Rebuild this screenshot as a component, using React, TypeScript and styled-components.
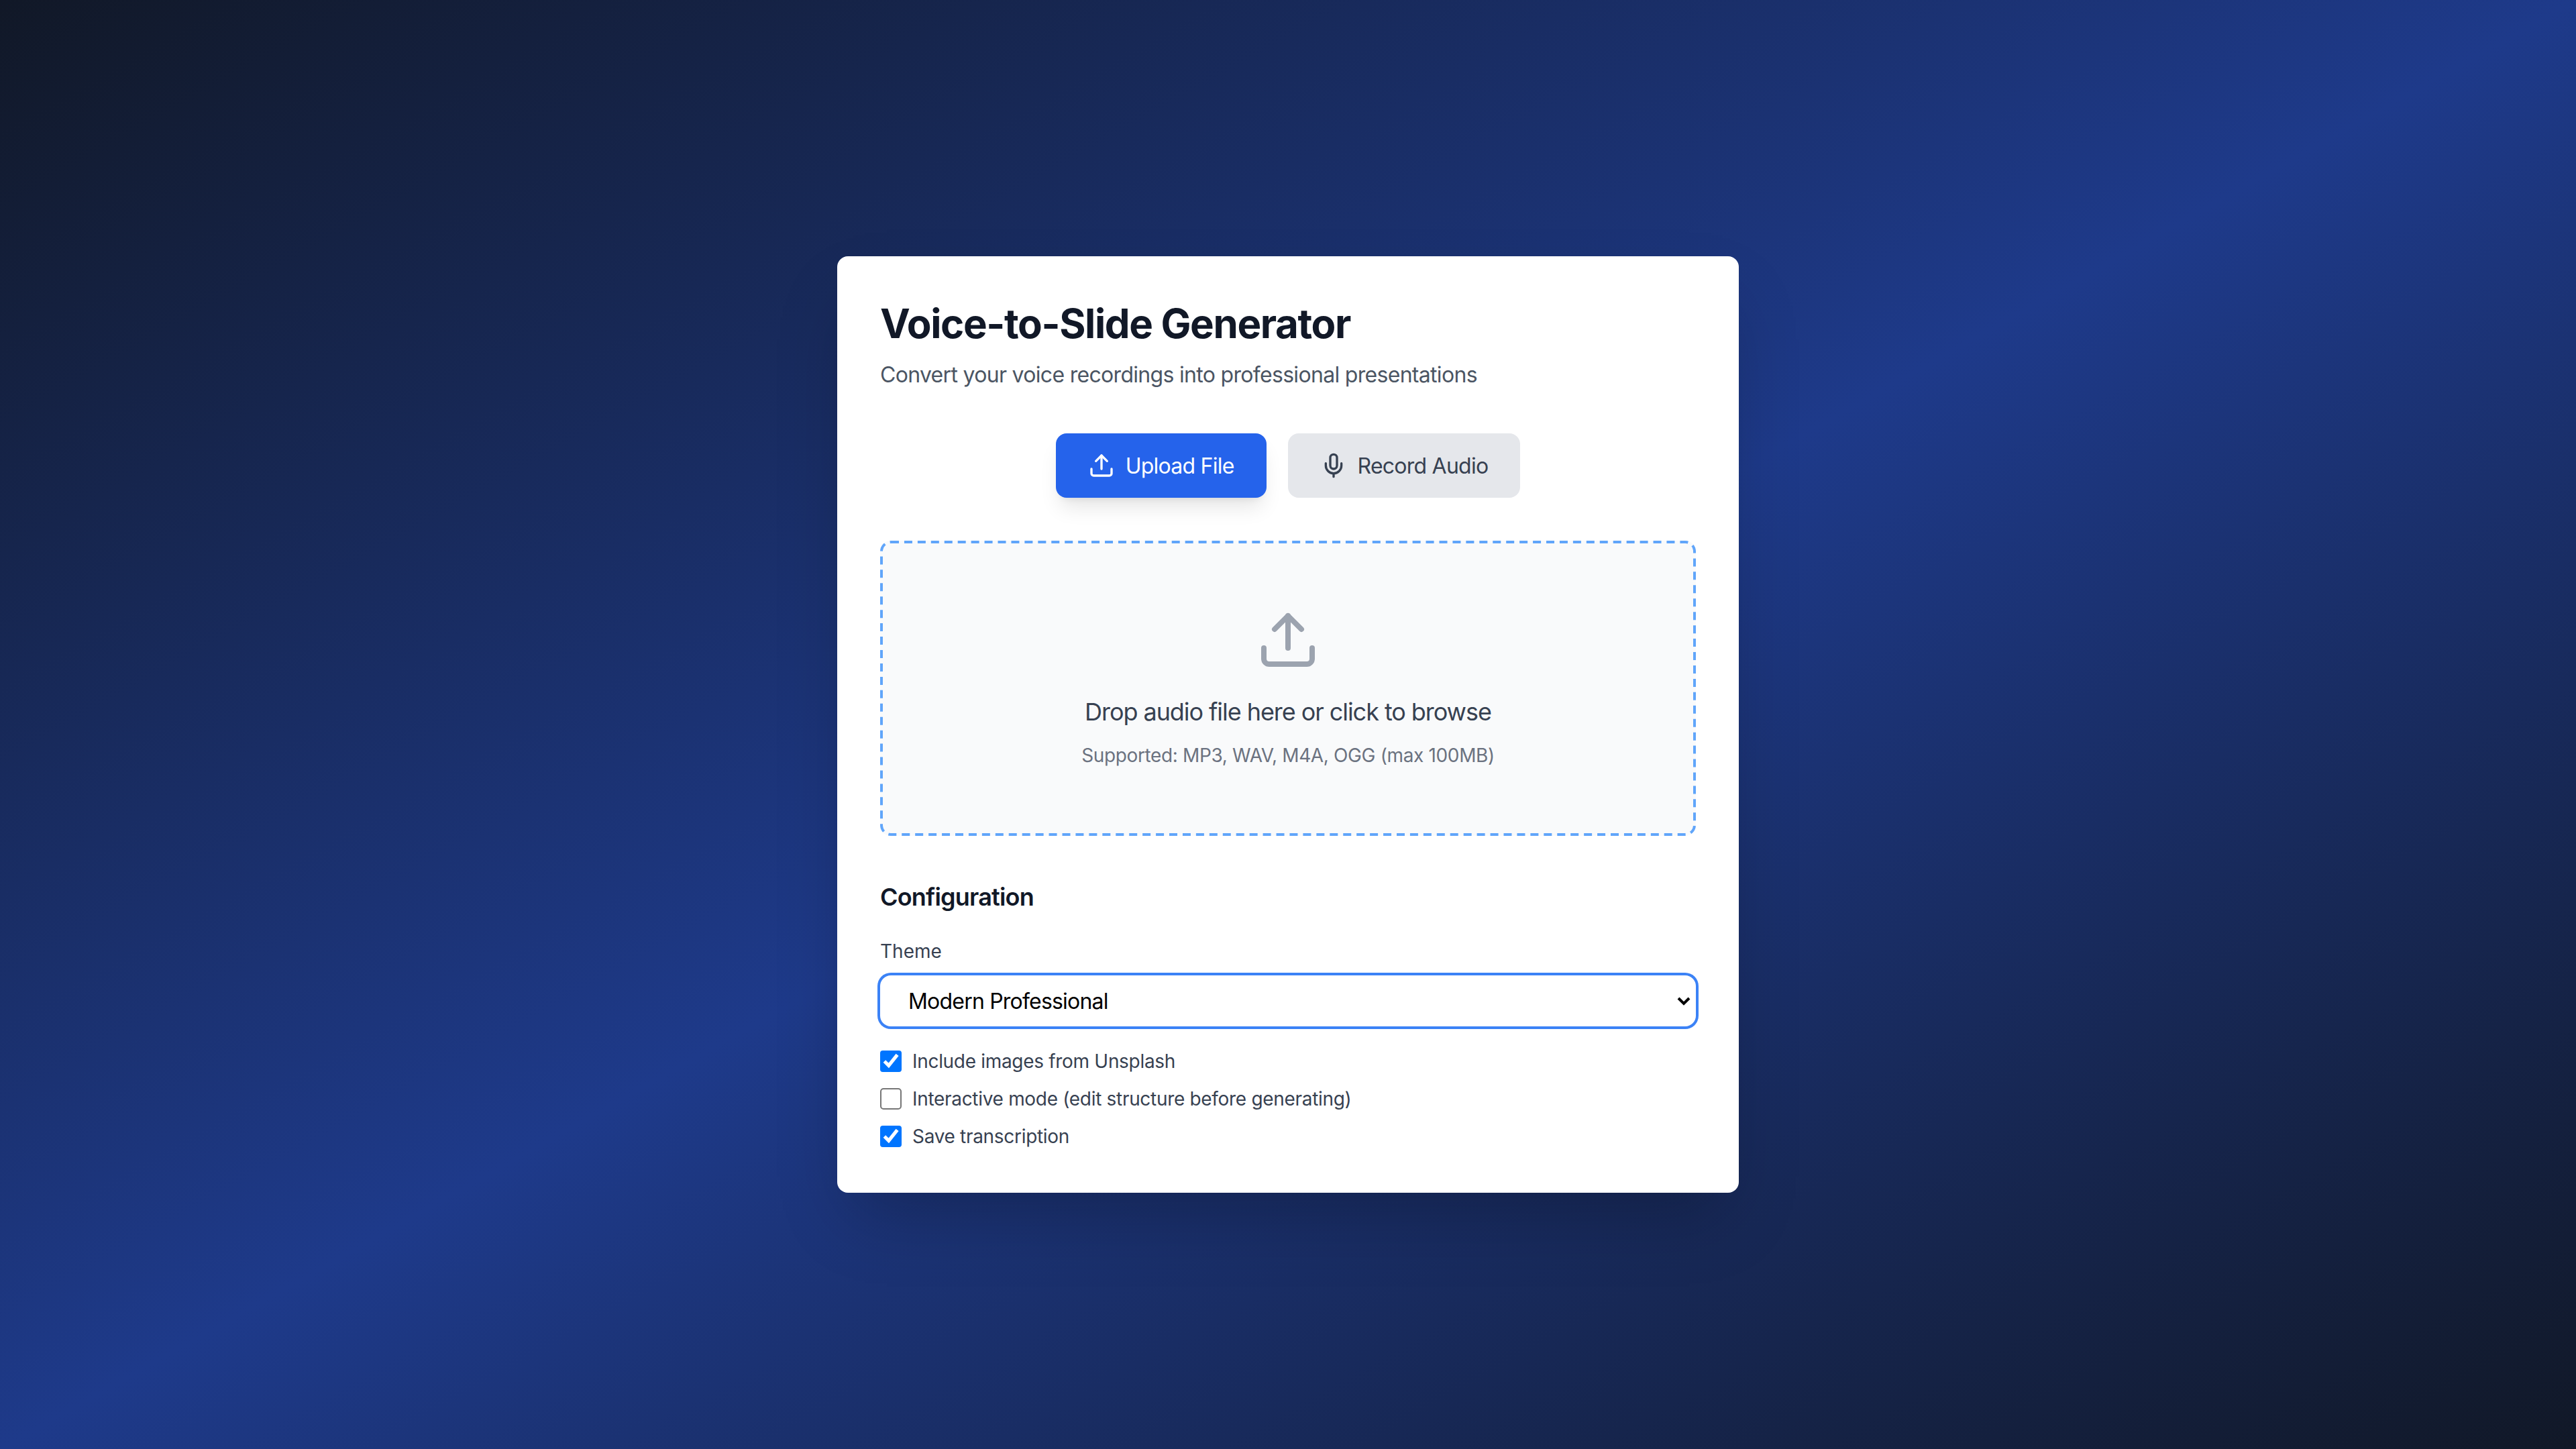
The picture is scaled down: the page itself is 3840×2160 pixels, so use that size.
import React from "react";
import styled, { createGlobalStyle } from "styled-components";
import { Upload, Mic } from "lucide-react";

const Global = createGlobalStyle`
  * { box-sizing: border-box; }
  html, body { margin: 0; padding: 0; }
  body { font-family: Inter, "Noto Sans", sans-serif; }
`;

const Page = styled.main`
  min-height: 100vh;
  display: flex;
  align-items: center;
  justify-content: center;
  background: linear-gradient(to bottom right, #111827, #1e3a8a, #111827);
`;

const Card = styled.section`
  transform: scale(2);
  width: 672px;
  padding: 32px;
  background: #fff;
  border-radius: 8px;
  box-shadow: 0 25px 50px -12px rgba(0, 0, 0, 0.25);
`;

const Title = styled.h1`
  margin: 0;
  font-size: 30px;
  line-height: 36px;
  font-weight: 700;
  letter-spacing: -0.69px;
  color: #111827;
`;

const Subtitle = styled.p`
  margin: 8px 0 0;
  font-size: 16px;
  line-height: 24px;
  letter-spacing: -0.345px;
  color: #4b5563;
`;

const Tabs = styled.div`
  display: flex;
  justify-content: center;
  gap: 16px;
  margin: 32px 0;
`;

const Tab = styled.button<{ $active?: boolean }>`
  display: flex;
  align-items: center;
  gap: 8px;
  height: 48px;
  padding: 0 24px;
  border: 0;
  border-radius: 8px;
  font-family: inherit;
  font-size: 16px;
  line-height: 24px;
  font-weight: 400;
  letter-spacing: -0.38px;
  color: ${(p) => (p.$active ? "#fff" : "#374151")};
  background: ${(p) => (p.$active ? "#2563eb" : "#e5e7eb")};
  box-shadow: ${(p) =>
    p.$active
      ? "0 10px 15px -3px rgba(0,0,0,.1), 0 4px 6px -4px rgba(0,0,0,.1)"
      : "none"};
`;

const DropZone = styled.div`
  display: flex;
  flex-direction: column;
  align-items: center;
  padding: 48px;
  border: 2px dashed #60a5fa;
  border-radius: 8px;
  background: #f9fafb;
  color: #9ca3af;
`;

const DropText = styled.p`
  margin: 16px 0 0;
  font-size: 18px;
  line-height: 28px;
  letter-spacing: -0.53px;
  color: #374151;
`;

const DropHint = styled.p`
  margin: 8px 0 0;
  font-size: 14px;
  line-height: 20px;
  letter-spacing: -0.18px;
  color: #6b7280;
`;

const Heading = styled.h2`
  margin: 32px 0 0;
  font-size: 18px;
  line-height: 28px;
  font-weight: 600;
  letter-spacing: -0.4px;
  color: #111827;
`;

const FieldLabel = styled.label`
  display: block;
  margin: 16px 0 8px;
  font-size: 14px;
  line-height: 20px;
  font-weight: 400;
  color: #374151;
`;

const ThemeSelect = styled.select`
  display: block;
  width: 100%;
  height: 38px;
  padding: 0 16px;
  border: 1px solid transparent;
  border-radius: 8px;
  outline: 0;
  background: #fff;
  box-shadow: 0 0 0 2px #3b82f6;
  font-family: inherit;
  font-size: 16px;
  letter-spacing: -0.4px;
  color: #000;
`;

const Options = styled.div`
  display: flex;
  flex-direction: column;
  gap: 8px;
  margin-top: 16px;
`;

const OptionRow = styled.label`
  display: flex;
  align-items: center;
  font-size: 14px;
  line-height: 20px;
  letter-spacing: -0.155px;
  color: #374151;
`;

const Check = styled.input.attrs({ type: "checkbox" })`
  width: 16px;
  height: 16px;
  margin: 0 8px 0 0;
`;

export default function App() {
  return (
    <Page>
      <Global />
      <Card>
        <Title>Voice-to-Slide Generator</Title>
        <Subtitle>Convert your voice recordings into professional presentations</Subtitle>
        <Tabs>
          <Tab $active>
            <Upload size={20} />
            Upload File
          </Tab>
          <Tab>
            <Mic size={20} />
            Record Audio
          </Tab>
        </Tabs>
        <DropZone>
          <Upload size={48} />
          <DropText>Drop audio file here or click to browse</DropText>
          <DropHint>Supported: MP3, WAV, M4A, OGG (max 100MB)</DropHint>
        </DropZone>
        <Heading>Configuration</Heading>
        <FieldLabel htmlFor="theme">Theme</FieldLabel>
        <ThemeSelect id="theme" defaultValue="modern">
          <option value="modern">Modern Professional</option>
          <option value="minimal">Minimal</option>
        </ThemeSelect>
        <Options>
          <OptionRow>
            <Check defaultChecked />
            Include images from Unsplash
          </OptionRow>
          <OptionRow>
            <Check />
            Interactive mode (edit structure before generating)
          </OptionRow>
          <OptionRow>
            <Check defaultChecked />
            Save transcription
          </OptionRow>
        </Options>
      </Card>
    </Page>
  );
}
